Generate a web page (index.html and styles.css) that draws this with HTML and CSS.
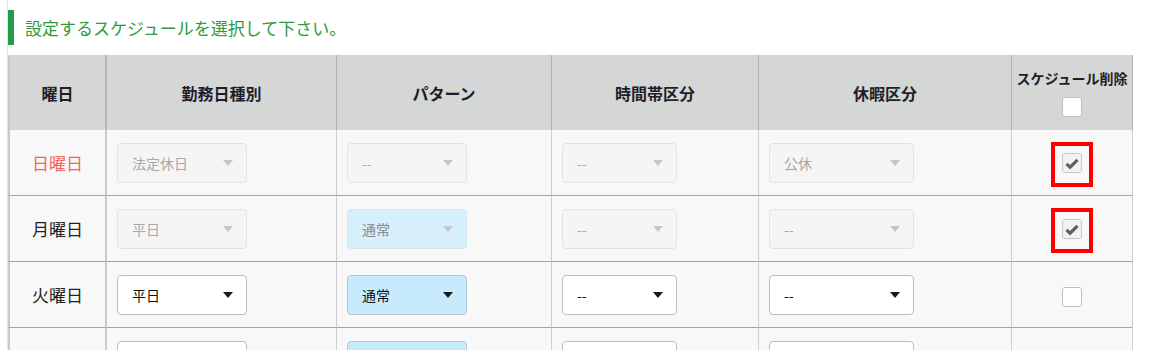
FILE: index.html
```html
<!DOCTYPE html>
<html lang="ja">
  <head>
    <meta charset="UTF-8" />
    <meta name="viewport" content="width=device-width, initial-scale=1.0" />
    <title>スケジュール設定</title>
    <link rel="stylesheet" href="styles.css">
  </head>
  <body>
    <div class="panel">
      <h2 class="section-title">設定するスケジュールを選択して下さい。</h2>

      <table class="schedule">
        <thead>
          <tr>
            <th class="col-day">曜日</th>
            <th class="col-kind">勤務日種別</th>
            <th class="col-pattern">パターン</th>
            <th class="col-time">時間帯区分</th>
            <th class="col-leave">休暇区分</th>
            <th class="col-delete">
              <div class="delete-label">スケジュール削除</div>
              <span class="check"></span>
            </th>
          </tr>
        </thead>
        <tbody>
          <!-- 日曜日: locked row -->
          <tr>
            <td class="day sunday">日曜日</td>
            <td><div class="select kind disabled"><span>法定休日</span><i class="caret"></i></div></td>
            <td><div class="select pattern disabled"><span>--</span><i class="caret"></i></div></td>
            <td><div class="select time disabled"><span>--</span><i class="caret"></i></div></td>
            <td><div class="select leave disabled"><span>公休</span><i class="caret"></i></div></td>
            <td class="delete">
              <span class="marker"><span class="check checked"><svg viewBox="0 0 18 18"><path d="M3.5 9.8l3.6 3.4L14.5 5.8" /></svg></span></span>
            </td>
          </tr>
          <tr>
            <td class="day">月曜日</td>
            <td><div class="select kind disabled"><span>平日</span><i class="caret"></i></div></td>
            <td><div class="select pattern blue disabled"><span>通常</span><i class="caret"></i></div></td>
            <td><div class="select time disabled"><span>--</span><i class="caret"></i></div></td>
            <td><div class="select leave disabled"><span>--</span><i class="caret"></i></div></td>
            <td class="delete">
              <span class="marker"><span class="check checked"><svg viewBox="0 0 18 18"><path d="M3.5 9.8l3.6 3.4L14.5 5.8" /></svg></span></span>
            </td>
          </tr>
          <tr>
            <td class="day">火曜日</td>
            <td><div class="select kind"><span>平日</span><i class="caret"></i></div></td>
            <td><div class="select pattern blue"><span>通常</span><i class="caret"></i></div></td>
            <td><div class="select time"><span>--</span><i class="caret"></i></div></td>
            <td><div class="select leave"><span>--</span><i class="caret"></i></div></td>
            <td class="delete"><span class="check"></span></td>
          </tr>
          <tr>
            <td class="day">水曜日</td>
            <td><div class="select kind"><span>平日</span><i class="caret"></i></div></td>
            <td><div class="select pattern blue"><span>通常</span><i class="caret"></i></div></td>
            <td><div class="select time"><span>--</span><i class="caret"></i></div></td>
            <td><div class="select leave"><span>--</span><i class="caret"></i></div></td>
            <td class="delete"><span class="check"></span></td>
          </tr>
        </tbody>
      </table>
    </div>
  </body>
</html>
```

FILE: styles.css
```css
body {
  margin: 0;
  font-family: "Noto Sans CJK JP", "Noto Sans", sans-serif;
  color: #222;
  background-color: #fff;
}

.panel {
  margin-left: 7px;
  padding-top: 10px;
  border-left: 1px solid #e4e4e4;
  min-height: 400px;
}

.section-title {
  margin: 0 0 10px;
  height: 35px;
  line-height: 35px;
  padding-left: 11px;
  border-left: 6px solid #1f9d48;
  font-size: 17px;
  font-weight: normal;
  color: #2e9a3c;
}

.schedule {
  width: 1125px;
  table-layout: fixed;
  border-collapse: separate;
  border-spacing: 0;
}

th,
td {
  box-sizing: border-box;
  padding: 0 10px;
  vertical-align: middle;
}

th {
  height: 75px;
  background-color: #d5d6d6;
  border-right: 1px solid #b2b2b2;
  font-size: 16px;
  font-weight: bold;
  color: #1e1e28;
  text-align: center;
}

td {
  height: 66px;
  background-color: #f8f8f8;
  border-right: 1px solid #cecece;
  border-bottom: 1px solid #a4a4a4;
}

th:first-child,
td:first-child {
  border-left: 2px solid #c9c9c9;
  border-right: 2px solid #b8b8b8;
}

td:first-child {
  border-right-color: #c9c9c9;
}

.col-day { width: 99px; }
.col-kind { width: 230px; }
.col-pattern { width: 215px; }
.col-time { width: 207px; }
.col-leave { width: 253px; }
.col-delete { width: 121px; padding: 0; }

.delete-label {
  font-size: 14px;
  line-height: 20px;
  margin-bottom: 4px;
  white-space: nowrap;
}

.day {
  text-align: center;
  font-size: 17px;
  color: #222;
}

.day.sunday {
  color: #f46464;
}

/* select boxes */
.select {
  box-sizing: border-box;
  display: flex;
  align-items: center;
  justify-content: space-between;
  height: 40px;
  padding: 0 13px 0 14px;
  background-color: #fff;
  border: 1px solid #bdbdbd;
  border-radius: 4px;
  font-size: 14px;
  color: #111;
}

.select.kind { width: 130px; }
.select.pattern { width: 120px; }
.select.time { width: 115px; }
.select.leave { width: 145px; }

.select.blue {
  background-color: #c7ebfc;
  border-color: #b3c8d2;
}

.select.disabled {
  background-color: #f5f5f5;
  border-color: #e2e2e2;
  color: #a8a8a8;
}

.select.blue.disabled {
  background-color: #d6effb;
  border-color: #d3e7f1;
  color: #8a8a8a;
}

.caret {
  width: 0;
  height: 0;
  border-left: 5px solid transparent;
  border-right: 5px solid transparent;
  border-top: 6px solid #1a1a1a;
}

.select.disabled .caret {
  border-top-color: #c6c6c6;
}

/* delete checkboxes */
.delete {
  text-align: center;
  padding: 0;
}

.check {
  box-sizing: border-box;
  display: inline-block;
  width: 20px;
  height: 20px;
  background-color: #fff;
  border: 1px solid #bfbfbf;
  border-radius: 3px;
  vertical-align: middle;
}

.check.checked {
  background-color: #f2f2f2;
  border-color: #c8c8c8;
}

.check svg {
  display: block;
  width: 18px;
  height: 18px;
}

.check svg path {
  fill: none;
  stroke: #606060;
  stroke-width: 3.2;
}

.marker {
  display: inline-flex;
  padding: 7px 7px 10px;
  border: 4px solid #f00;
  margin-top: 3px;
}
```
